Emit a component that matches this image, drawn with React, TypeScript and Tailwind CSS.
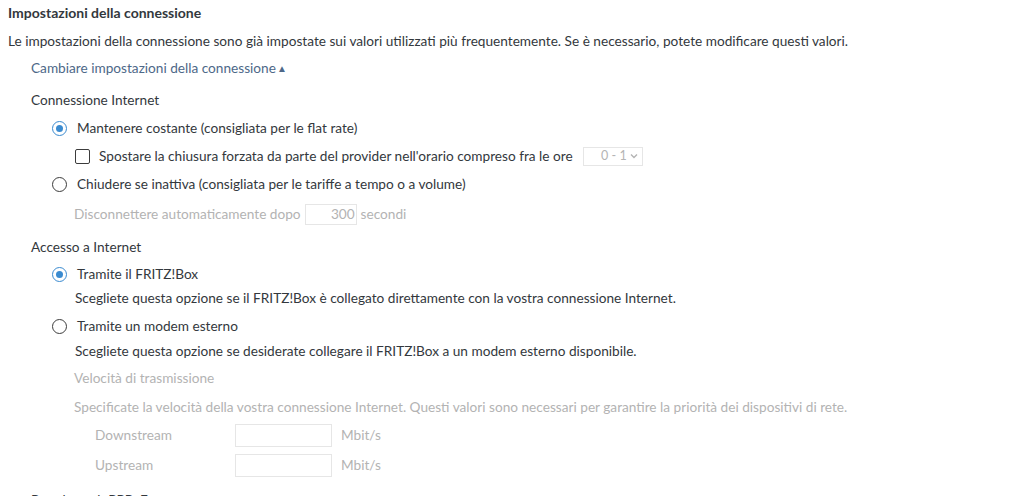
import React from "react";

const font = { fontFamily: "Lato, 'Noto Sans', sans-serif" };

function Radio({ checked }: { checked?: boolean }) {
  return (
    <span
      className={`flex h-[15px] w-[15px] shrink-0 items-center justify-center rounded-full border-[1.5px] bg-white ${
        checked ? "border-[#3b8bd0]" : "border-[#3c3c3c]"
      }`}
    >
      {checked && <span className="h-[7px] w-[7px] rounded-full bg-[#3b8bd0]" />}
    </span>
  );
}

function Row({ top, className = "", children }: { top: string; className?: string; children: React.ReactNode }) {
  return <div className={`flex h-[24px] items-center ${top} ${className}`}>{children}</div>;
}

export default function App() {
  return (
    <div className="h-[496px] w-[1024px] overflow-hidden bg-white text-[13.65px] text-[#33383d]" style={font}>
      <div className="flex flex-col">
        <Row top="mt-0" className="pl-[8px] font-bold text-[14px]">
          Impostazioni della connessione
        </Row>
        <Row top="mt-[5px]" className="pl-[8px]">
          Le impostazioni della connessione sono già impostate sui valori utilizzati più frequentemente. Se è necessario, potete modificare questi valori.
        </Row>
        <Row top="mt-[3px]" className="pl-[31px] text-[#4d6888]">
          Cambiare impostazioni della connessione
          <span className="ml-[1px] text-[10px]">▲</span>
        </Row>
        <Row top="mt-[8px]" className="pl-[31px]">
          Connessione Internet
        </Row>
        <Row top="mt-[4px]" className="pl-[52px] gap-[10px]">
          <Radio checked />
          <span>Mantenere costante (consigliata per le flat rate)</span>
        </Row>
        <Row top="mt-[4px]" className="pl-[75px]">
          <span className="h-[15px] w-[15px] shrink-0 rounded-[2px] border-[1.5px] border-[#3c3c3c] bg-white" />
          <span className="ml-[9px]">Spostare la chiusura forzata da parte del provider nell'orario compreso fra le ore</span>
          <span className="ml-[10px] flex h-[19px] w-[60px] items-center justify-end gap-[3px] border border-[#e6e6e6] pr-[4px] text-[12.5px] text-[#b4b4b4]">
            0 - 1
            <svg width="8" height="6" viewBox="0 0 8 6" fill="none">
              <path d="M1 1.5 L4 4.5 L7 1.5" stroke="#b4b4b4" strokeWidth="1.4" />
            </svg>
          </span>
        </Row>
        <Row top="mt-[4px]" className="pl-[52px] gap-[10px]">
          <Radio />
          <span>Chiudere se inattiva (consigliata per le tariffe a tempo o a volume)</span>
        </Row>
        <Row top="mt-[6px]" className="pl-[74px] text-[#b3b3b3]">
          Disconnettere automaticamente dopo
          <span className="mx-[4px] flex h-[21px] w-[52px] items-center justify-end border border-[#e6e6e6] pr-[1px]">300</span>
          secondi
        </Row>
        <Row top="mt-[9px]" className="pl-[31px]">
          Accesso a Internet
        </Row>
        <Row top="mt-[3px]" className="pl-[52px] gap-[10px]">
          <Radio checked />
          <span>Tramite il FRITZ!Box</span>
        </Row>
        <Row top="mt-0" className="pl-[75px]">
          Scegliete questa opzione se il FRITZ!Box è collegato direttamente con la vostra connessione Internet.
        </Row>
        <Row top="mt-[4px]" className="pl-[52px] gap-[10px]">
          <Radio />
          <span>Tramite un modem esterno</span>
        </Row>
        <Row top="mt-[1px]" className="pl-[75px]">
          Scegliete questa opzione se desiderate collegare il FRITZ!Box a un modem esterno disponibile.
        </Row>
        <Row top="mt-[3px]" className="pl-[74px] text-[#b3b3b3]">
          Velocità di trasmissione
        </Row>
        <Row top="mt-[5px]" className="pl-[74px] text-[#b3b3b3]">
          Specificate la velocità della vostra connessione Internet. Questi valori sono necessari per garantire la priorità dei dispositivi di rete.
        </Row>
        {[
          { label: "Downstream", top: "mt-[4px]" },
          { label: "Upstream", top: "mt-[6px]" },
        ].map((r) => (
          <Row key={r.label} top={r.top} className="pl-[95px] text-[#b3b3b3]">
            <span className="w-[140px]">{r.label}</span>
            <span className="h-[23px] w-[97px] border border-[#e6e6e6]" />
            <span className="ml-[9px]">Mbit/s</span>
          </Row>
        ))}
        <Row top="mt-[11px]" className="pl-[31px]">
          Passthrough PPPoE
        </Row>
      </div>
    </div>
  );
}
